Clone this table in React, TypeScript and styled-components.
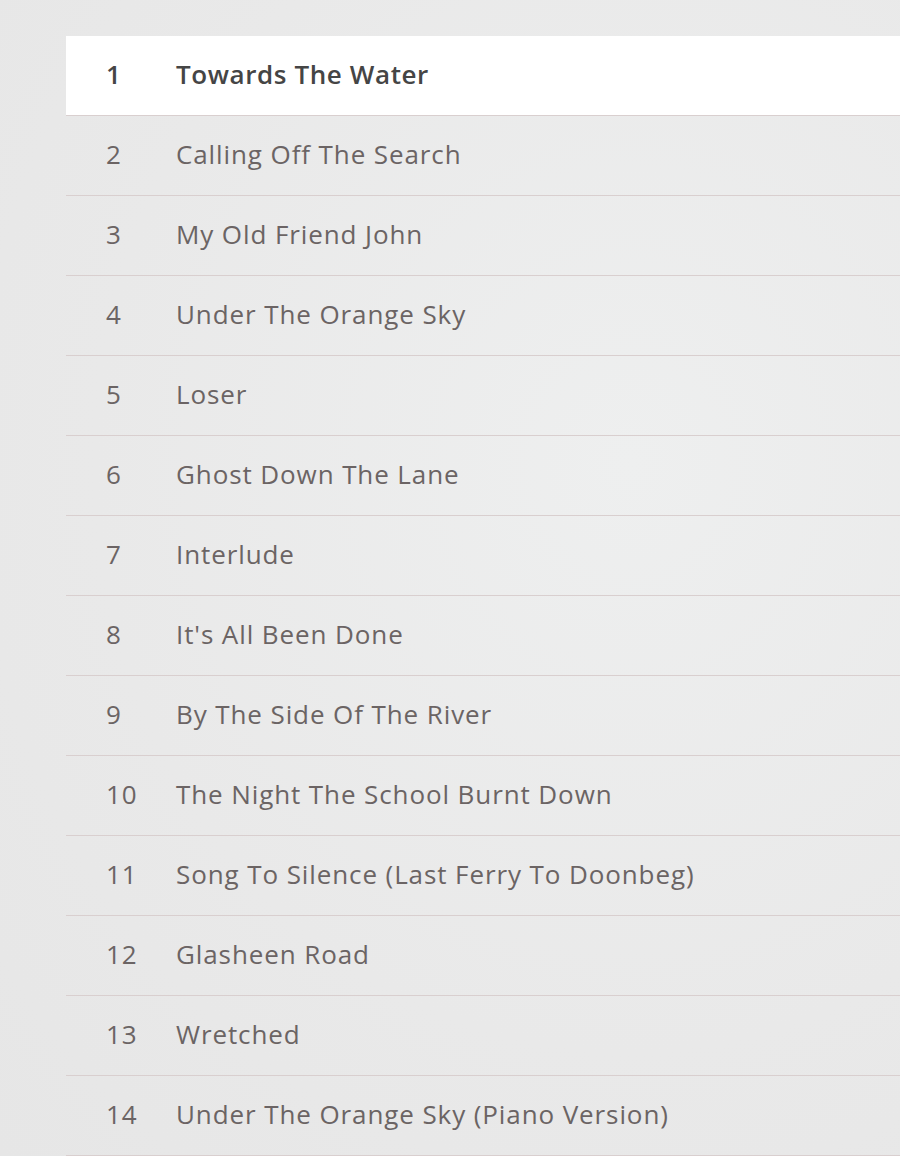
import React from "react";
import styled, { createGlobalStyle } from "styled-components";

const GlobalStyle = createGlobalStyle`
  html, body { margin: 0; padding: 0; }
  body {
    background: radial-gradient(ellipse at 70% 40%, #eeefef 0%, #e9e9e9 60%, #e6e6e6 100%);
    min-height: 1156px;
    font-family: "Open Sans", "Noto Sans", sans-serif;
  }
`;

const Page = styled.div`
  padding: 36px 0 0 66px;
  height: 1156px;
  box-sizing: border-box;
  overflow: hidden;
`;

const List = styled.ol`
  list-style: none;
  margin: 0;
  padding: 0;
`;

const Row = styled.li<{ $active?: boolean }>`
  display: flex;
  align-items: center;
  padding-bottom: 3px;
  box-sizing: border-box;
  height: 80px;
  border-bottom: 1px solid #d9cfcf;
  background: ${(p) => (p.$active ? "#ffffff" : "transparent")};
  color: ${(p) => (p.$active ? "#454545" : "#6b6464")};
  font-weight: ${(p) => (p.$active ? 600 : 400)};
  font-size: 26px;
  letter-spacing: ${(p) => (p.$active ? "0.6px" : "0.9px")};
`;

const Num = styled.span`
  width: 110px;
  padding-left: 40px;
  box-sizing: border-box;
  flex: none;
`;

const Title = styled.span`
  white-space: nowrap;
`;

const tracks = [
  "Towards The Water",
  "Calling Off The Search",
  "My Old Friend John",
  "Under The Orange Sky",
  "Loser",
  "Ghost Down The Lane",
  "Interlude",
  "It's All Been Done",
  "By The Side Of The River",
  "The Night The School Burnt Down",
  "Song To Silence (Last Ferry To Doonbeg)",
  "Glasheen Road",
  "Wretched",
  "Under The Orange Sky (Piano Version)",
];

export default function App() {
  return (
    <>
      <GlobalStyle />
      <Page>
        <List>
          {tracks.map((t, i) => (
            <Row key={t} $active={i === 0}>
              <Num>{i + 1}</Num>
              <Title>{t}</Title>
            </Row>
          ))}
        </List>
      </Page>
    </>
  );
}
